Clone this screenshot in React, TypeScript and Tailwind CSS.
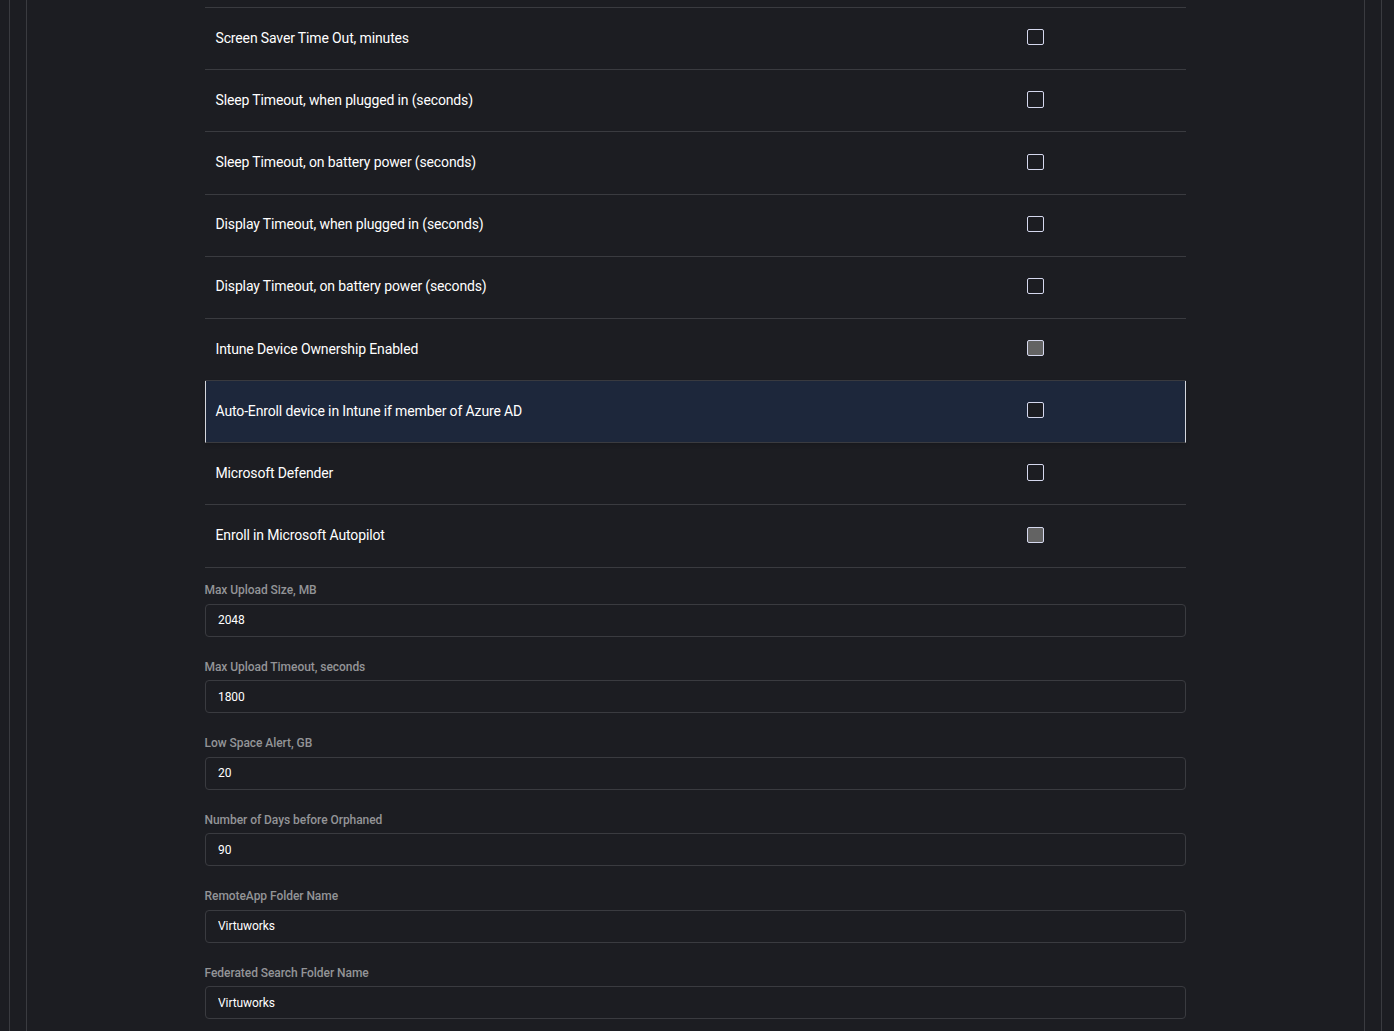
const rows = [
    { label: "Screen Saver Time Out, minutes" },
    { label: "Sleep Timeout, when plugged in (seconds)" },
    { label: "Sleep Timeout, on battery power (seconds)" },
    { label: "Display Timeout, when plugged in (seconds)" },
    { label: "Display Timeout, on battery power (seconds)" },
    { label: "Intune Device Ownership Enabled", disabled: true },
    { label: "Auto-Enroll device in Intune if member of Azure AD", active: true },
    { label: "Microsoft Defender" },
    { label: "Enroll in Microsoft Autopilot", disabled: true },
];

const fields = [
    { label: "Max Upload Size, MB", value: "2048" },
    { label: "Max Upload Timeout, seconds", value: "1800" },
    { label: "Low Space Alert, GB", value: "20" },
    { label: "Number of Days before Orphaned", value: "90" },
    { label: "RemoteApp Folder Name", value: "Virtuworks" },
    { label: "Federated Search Folder Name", value: "Virtuworks" },
];

const SettingRow = ({ label, disabled, active }: { label: string; disabled?: boolean; active?: boolean }) => (
    <div
        className={`grid h-[62.18px] grid-cols-[821px_1fr] items-center border-b border-[#3a3b40] ${
            active ? "border-x border-x-[#d4d6dc] bg-[#1d273b] shadow-[0_2px_4px_rgba(0,0,0,0.15)]" : "px-px"
        }`}
    >
        <span className="mb-[0.6px] pl-[9.5px] text-[14px] tracking-[-0.14px] text-white">{label}</span>
        <span
            className={`mb-[2.64px] block h-[16.2px] w-[16.5px] rounded-[2px] border border-[#d5d8ee] ${
                disabled ? "bg-[#636363]" : "bg-[#1c1d22]"
            }`}
        />
    </div>
);

const Field = ({ label, value }: { label: string; value: string }) => (
    <div className="h-[76.5px]">
        <label className="ml-[-0.5px] block pt-[14.7px] text-[12px] leading-[16px] font-medium tracking-[-0.05px] text-[#939497]">
            {label}
        </label>
        <input
            readOnly
            value={value}
            className="mt-[5.3px] block h-[33px] w-full rounded-[4px] border border-[#3a3b40] bg-transparent px-[12px] pt-[0.1px] text-[12px] tracking-[-0.08px] text-white outline-none"
        />
    </div>
);

export default function App() {
    return (
        <div className="h-[1031px] overflow-hidden bg-[#1c1d22] pl-[9px] pr-[12px] font-['Roboto',sans-serif]">
            <div className="h-full border-x border-[#3a3b40] pl-[16px] pr-[16px]">
                <div className="h-full border-x border-[#3a3b40] px-[178px] pt-[7px]">
                    <div className="border-t border-[#3a3b40]">
                        {rows.map((row) => (
                            <SettingRow key={row.label} {...row} />
                        ))}
                    </div>
                    {fields.map((field) => (
                        <Field key={field.label} {...field} />
                    ))}
                </div>
            </div>
        </div>
    );
}
